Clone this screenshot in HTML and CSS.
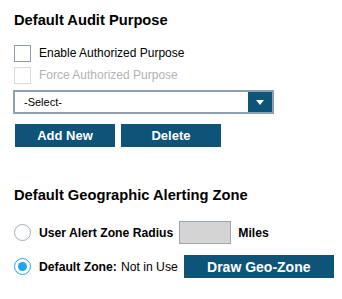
FILE: index.html
```html
<!DOCTYPE html>
<html lang="en">
<head>
    <meta charset="UTF-8">
    <meta name="viewport" content="width=device-width, initial-scale=1.0">
    <title>Settings</title>
    <link rel="stylesheet" href="styles.css">
</head>
<body>
    <div class="panel">
        <h2 class="title">Default Audit Purpose</h2>

        <label class="check-row">
            <span class="box"></span>
            <span>Enable Authorized Purpose</span>
        </label>
        <label class="check-row disabled">
            <span class="box"></span>
            <span>Force Authorized Purpose</span>
        </label>

        <div class="select-box">
            <span class="select-text">-Select-</span>
            <span class="select-arrow"></span>
        </div>

        <div class="btn-row">
            <button class="btn">Add New</button>
            <button class="btn">Delete</button>
        </div>

        <h2 class="title title-geo">Default Geographic Alerting Zone</h2>

        <div class="radio-row first">
            <span class="radio"></span>
            <span class="label">User Alert Zone Radius</span>
            <span class="radius-input"></span>
            <span class="label">Miles</span>
        </div>
        <div class="radio-row">
            <span class="radio checked"></span>
            <span class="label">Default Zone:</span>
            <span class="status">Not in Use</span>
            <button class="btn btn-wide">Draw Geo-Zone</button>
        </div>
    </div>
</body>
</html>
```

FILE: styles.css
```css
body {
    margin: 0;
    padding: 0;
    font-family: "Liberation Sans", Arial, sans-serif;
    background: #ffffff;
    color: #000000;
}

.panel {
    padding: 11px 0 0 14px;
}

.title {
    margin: 0 0 13px 0;
    font-size: 14.7px;
    line-height: 18px;
    font-weight: bold;
}

.title-geo {
    margin-top: 39px;
    margin-bottom: 0;
}

/* checkboxes */
.check-row {
    display: flex;
    align-items: center;
    gap: 8px;
    height: 22px;
    font-size: 12px;
}

.check-row .box {
    width: 17px;
    height: 17px;
    box-sizing: border-box;
    border: 1.5px solid #8d9caa;
    background: #ffffff;
}

.check-row.disabled {
    color: #b3b3b3;
}

.check-row.disabled .box {
    border-color: #d3dbe1;
}

/* select */
.select-box {
    display: flex;
    align-items: center;
    justify-content: space-between;
    width: 261px;
    height: 24px;
    box-sizing: border-box;
    margin: 4px 0 0 -1px;
    border: 2px solid #8fa0b0;
    background: #ffffff;
}

.select-text {
    padding-left: 9px;
    font-size: 11px;
}

.select-arrow {
    position: relative;
    width: 24px;
    height: 100%;
    background: #0e5478;
}

.select-arrow::after {
    content: "";
    position: absolute;
    left: 8px;
    top: 8px;
    border-left: 4px solid transparent;
    border-right: 4px solid transparent;
    border-top: 5px solid #ffffff;
}

/* buttons */
.btn-row {
    display: flex;
    gap: 6px;
    margin: 10px 0 0 1px;
}

.btn {
    width: 100px;
    height: 23px;
    padding: 0;
    border: none;
    background: #0e5478;
    color: #ffffff;
    font-family: "Liberation Sans", Arial, sans-serif;
    font-size: 13px;
    font-weight: bold;
}

.btn-wide {
    width: 150px;
    margin-left: 6px;
    font-size: 14px;
}

/* radios */
.radio-row {
    display: flex;
    align-items: center;
    height: 23px;
    margin-top: 11px;
    font-size: 12.2px;
}

.radio-row.first {
    margin-top: 17px;
}

.radio {
    position: relative;
    width: 17px;
    height: 17px;
    box-sizing: border-box;
    border: 1.5px solid #a3adb7;
    border-radius: 50%;
    margin-right: 8px;
}

.radio.checked {
    border-color: #1fa8e8;
}

.radio.checked::after {
    content: "";
    position: absolute;
    left: 2.5px;
    top: 2.5px;
    width: 9px;
    height: 9px;
    border-radius: 50%;
    background: #1fa8e8;
}

.label {
    font-weight: bold;
}

.status {
    margin-left: 4px;
}

.radius-input {
    width: 52px;
    height: 23px;
    box-sizing: border-box;
    margin: 0 7px 0 6px;
    border: 1.5px solid #9aa8b6;
    background: #d4d4d4;
}
```
